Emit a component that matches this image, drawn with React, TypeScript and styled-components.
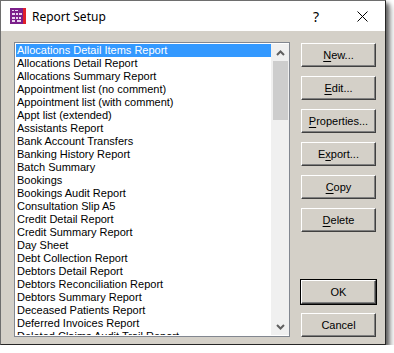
import React from "react";
import styled, { createGlobalStyle } from "styled-components";

const GlobalStyle = createGlobalStyle`
  html, body {
    margin: 0;
    padding: 0;
    background: #ffffff;
  }
  body {
    font-family: "Liberation Sans", Arial, sans-serif;
    font-size: 11px;
  }
`;

const UI_FONT = `"Liberation Sans", Arial, sans-serif`;

const Window = styled.div`
  display: flex;
  flex-direction: column;
  width: 386px;
  height: 345px;
  box-sizing: border-box;
  border: 1px solid #6e6e6e;
  border-right-color: #262626;
  border-bottom-color: #262626;
  background-color: #d4d0c8;
  box-shadow: 3px 3px 4px rgba(0, 0, 0, 0.55), 6px 6px 6px rgba(0, 0, 0, 0.2);
`;

const TitleBar = styled.div`
  display: flex;
  align-items: center;
  height: 30px;
  flex: 0 0 30px;
  background-color: #ffffff;
  padding-left: 9px;
`;

const TitleText = styled.span`
  font-family: "Noto Sans", "Open Sans", sans-serif;
  font-size: 12px;
  color: #000;
  margin-left: 6px;
  flex: 1;
`;

const TitleButton = styled.span<{ $width: number }>`
  display: flex;
  align-items: center;
  justify-content: center;
  width: ${(p) => p.$width}px;
  height: 30px;
  font-family: "Noto Sans", sans-serif;
  font-size: 14px;
  color: #000;
`;

const Body = styled.div`
  display: flex;
  flex: 1;
  gap: 11px;
  padding: 11px 9px 8px 13px;
`;

const ListBox = styled.div`
  display: flex;
  width: 277px;
  height: 295px;
  box-sizing: border-box;
  border: 1px solid #828790;
  background: #ffffff;
  padding: 1px 0 1px 1px;
  overflow: hidden;
`;

const Items = styled.div`
  flex: 1;
  overflow: hidden;
`;

const Item = styled.div<{ $selected?: boolean }>`
  height: 13px;
  line-height: 13px;
  padding-left: 1px;
  white-space: nowrap;
  font-family: ${UI_FONT};
  font-size: 11px;
  color: ${(p) => (p.$selected ? "#ffffff" : "#000000")};
  background: ${(p) => (p.$selected ? "#3399ff" : "transparent")};
`;

const ScrollBar = styled.div`
  display: flex;
  flex-direction: column;
  width: 17px;
  flex: 0 0 17px;
  background: #f0f0f0;
  border-left: 1px solid #f0f0f0;
`;

const ScrollArrow = styled.div`
  display: flex;
  align-items: center;
  justify-content: center;
  height: 17px;
  flex: 0 0 17px;
`;

const ScrollTrack = styled.div`
  flex: 1;
  display: flex;
  flex-direction: column;
  padding: 0 0 0 0;
`;

const Thumb = styled.div`
  height: 59px;
  margin: 0 1px;
  background: #cdcdcd;
`;

const ButtonColumn = styled.div`
  display: flex;
  flex-direction: column;
  justify-content: space-between;
  padding-top: 1px;
  height: 294px;
`;

const ButtonGroup = styled.div`
  display: flex;
  flex-direction: column;
  gap: 9px;
`;

const Button = styled.div<{ $default?: boolean }>`
  display: flex;
  align-items: center;
  justify-content: center;
  width: 75px;
  height: 24px;
  box-sizing: border-box;
  background: #d4d0c8;
  font-family: ${UI_FONT};
  font-size: 11px;
  color: #000;
  border: 1px solid;
  border-color: #ffffff #404040 #404040 #ffffff;
  box-shadow: ${(p) =>
    p.$default
      ? "0 0 0 1px #000, inset -1px -1px 0 #808080"
      : "inset -1px -1px 0 #808080"};

  u {
    text-decoration: underline;
    text-underline-offset: 2px;
  }
`;

const AppIcon = () => (
  <svg width="16" height="16" viewBox="0 0 16 16">
    <rect x="0" y="0" width="14" height="16" fill="#7b1f8a" />
    <rect x="13" y="0" width="3" height="16" fill="#e0202a" />
    <g fill="#e9d4ef">
      <rect x="2" y="2" width="2" height="1" />
      <rect x="5" y="2" width="3" height="1" />
      <rect x="2" y="5" width="3" height="2" />
      <rect x="6" y="5" width="2" height="2" />
      <rect x="9" y="5" width="3" height="2" />
      <rect x="2" y="9" width="3" height="2" />
      <rect x="6" y="9" width="2" height="2" />
      <rect x="9" y="9" width="2" height="2" />
      <rect x="2" y="12" width="3" height="2" />
      <rect x="7" y="12" width="4" height="2" />
    </g>
  </svg>
);

const Chevron = ({ up }: { up?: boolean }) => (
  <svg width="9" height="6" viewBox="0 0 9 6">
    <path
      d={up ? "M1 5 L4.5 1.5 L8 5" : "M1 1 L4.5 4.5 L8 1"}
      fill="none"
      stroke="#606060"
      strokeWidth="2"
    />
  </svg>
);

const reports = [
  "Allocations Detail Items Report",
  "Allocations Detail Report",
  "Allocations Summary Report",
  "Appointment list (no comment)",
  "Appointment list (with comment)",
  "Appt list (extended)",
  "Assistants Report",
  "Bank Account Transfers",
  "Banking History Report",
  "Batch Summary",
  "Bookings",
  "Bookings Audit Report",
  "Consultation Slip A5",
  "Credit Detail Report",
  "Credit Summary Report",
  "Day Sheet",
  "Debt Collection Report",
  "Debtors Detail Report",
  "Debtors Reconciliation Report",
  "Debtors Summary Report",
  "Deceased Patients Report",
  "Deferred Invoices Report",
  "Deleted Claims Audit Trail Report",
];

const App: React.FC = () => {
  return (
    <>
      <GlobalStyle />
      <Window>
        <TitleBar>
          <AppIcon />
          <TitleText>Report Setup</TitleText>
          <TitleButton $width={46}>?</TitleButton>
          <TitleButton $width={46}>
            <svg width="11" height="11" viewBox="0 0 11 11">
              <path d="M0.5 0.5 L10.5 10.5 M10.5 0.5 L0.5 10.5" stroke="#000" strokeWidth="1" />
            </svg>
          </TitleButton>
        </TitleBar>
        <Body>
          <ListBox>
            <Items>
              {reports.map((r, i) => (
                <Item key={r} $selected={i === 0}>
                  {r}
                </Item>
              ))}
            </Items>
            <ScrollBar>
              <ScrollArrow>
                <Chevron up />
              </ScrollArrow>
              <ScrollTrack>
                <Thumb />
              </ScrollTrack>
              <ScrollArrow>
                <Chevron />
              </ScrollArrow>
            </ScrollBar>
          </ListBox>
          <ButtonColumn>
            <ButtonGroup>
              <Button>
                <u>N</u>ew...
              </Button>
              <Button>
                <u>E</u>dit...
              </Button>
              <Button>
                <u>P</u>roperties...
              </Button>
              <Button>
                E<u>x</u>port...
              </Button>
              <Button>
                <u>C</u>opy
              </Button>
              <Button>
                <u>D</u>elete
              </Button>
            </ButtonGroup>
            <ButtonGroup>
              <Button $default>OK</Button>
              <Button>Cancel</Button>
            </ButtonGroup>
          </ButtonColumn>
        </Body>
      </Window>
    </>
  );
};

export default App;
